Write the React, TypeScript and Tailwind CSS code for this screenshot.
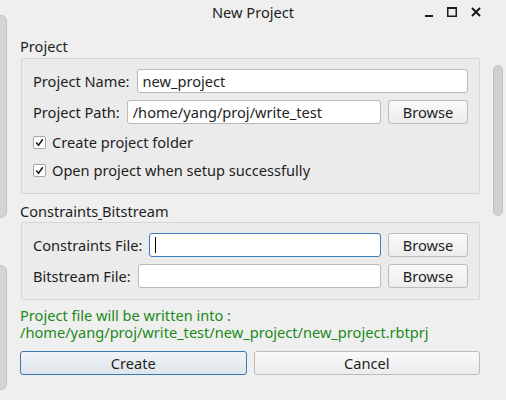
import React from 'react';

const FONT = { fontFamily: '"Noto Sans", "DejaVu Sans", sans-serif' };

const TextInput: React.FC<{ value?: string; focused?: boolean; className?: string }> = ({ value, focused, className }) => (
  <div
    className={`h-[24px] flex items-center px-[5px] bg-white rounded-[3px] border text-[14.6px] text-[#1e1e1e] ${
      focused ? 'border-[#3b7dbb]' : 'border-[#b9b9b9]'
    } ${className ?? ''}`}
  >
    {focused && <span className="w-px h-[16px] bg-black" />}
    {value}
  </div>
);

const Browse: React.FC = () => (
  <button className="w-[80px] h-[24px] rounded-[3px] border border-[#bcbcbc] bg-gradient-to-b from-[#fafafa] to-[#ececec] text-[14.6px] text-[#1e1e1e]">
    Browse
  </button>
);

const Check: React.FC<{ label: string }> = ({ label }) => (
  <div className="flex items-center h-[24px] gap-[6px]">
    <span className="w-[13px] h-[13px] bg-white border border-[#a5a5a5] rounded-[2px] flex items-center justify-center">
      <svg width="9" height="9" viewBox="0 0 9 9">
        <path d="M1.2 4.6 L3.5 7.3 L7.8 1.2" fill="none" stroke="#1a1a1a" strokeWidth="1.5" />
      </svg>
    </span>
    <span className="text-[14.6px] text-[#1e1e1e]">{label}</span>
  </div>
);

export default function App() {
  return (
    <div className="relative w-[506px] h-[400px] bg-[#efefef] overflow-hidden leading-[18px]" style={FONT}>
      {/* windows behind the dialog */}
      <div className="absolute left-[-8px] top-[15px] w-[15px] h-[203px] rounded-r-[6px] bg-[#d4d4d4] border border-[#c4c4c4]" />
      <div className="absolute left-[-8px] top-[265px] w-[15px] h-[125px] rounded-r-[6px] bg-[#d4d4d4] border border-[#c4c4c4]" />
      <div className="absolute left-[493px] top-[65px] w-[10px] h-[151px] rounded-[5px] bg-[#d0d0d0] border border-[#c2c2c2]" />

      {/* title bar */}
      <div className="relative h-[24px] flex items-center justify-center">
        <span className="text-[14.6px] text-[#222]">New Project</span>
        <div className="absolute right-[24px] top-[6px] flex items-center gap-[12px]">
          <svg width="10" height="12" viewBox="0 0 10 12">
            <rect x="1" y="9" width="8" height="2" fill="#1a1a1a" />
          </svg>
          <svg width="12" height="12" viewBox="0 0 12 12">
            <rect x="1.75" y="1.75" width="8.5" height="8.5" fill="none" stroke="#1a1a1a" strokeWidth="1.5" />
            <rect x="1" y="1" width="10" height="2" fill="#1a1a1a" />
          </svg>
          <svg width="12" height="12" viewBox="0 0 12 12">
            <path d="M2 2 L10 10 M10 2 L2 10" stroke="#1a1a1a" strokeWidth="2" />
          </svg>
        </div>
      </div>

      <div className="px-[20px] pr-[26px]">
        {/* Project */}
        <div className="h-[34px] flex items-end pb-[3px] text-[14.6px] text-[#1e1e1e]">Project</div>
        <div className="ml-px border border-[#d6d6d6] rounded-[2px] bg-[#ebebeb] h-[136px] pl-[11px] pr-[11px] pt-[10px]">
          <div className="flex items-center gap-[7px]">
            <span className="text-[14.6px] text-[#1e1e1e] whitespace-nowrap">Project Name:</span>
            <TextInput value="new_project" className="flex-1" />
          </div>
          <div className="flex items-center gap-[7px] mt-[7px]">
            <span className="text-[14.6px] text-[#1e1e1e] whitespace-nowrap">Project Path:</span>
            <TextInput value="/home/yang/proj/write_test" className="flex-1" />
            <Browse />
          </div>
          <div className="mt-[6px]">
            <Check label="Create project folder" />
          </div>
          <div className="mt-[4px]">
            <Check label="Open project when setup successfully" />
          </div>
        </div>

        {/* Constraints Bitstream */}
        <div className="h-[28px] flex items-end pb-[2px] text-[14.6px] text-[#1e1e1e] whitespace-pre">
          Constraints<span className="underline decoration-1 underline-offset-2">{' '}</span>Bitstream
        </div>
        <div className="ml-px border border-[#d6d6d6] rounded-[2px] bg-[#ebebeb] h-[78px] pl-[11px] pr-[11px] pt-[10px]">
          <div className="flex items-center gap-[7px]">
            <span className="text-[14.6px] text-[#1e1e1e] whitespace-nowrap">Constraints File:</span>
            <TextInput focused className="flex-1" />
            <Browse />
          </div>
          <div className="flex items-center gap-[7px] mt-[7px]">
            <span className="text-[14.6px] text-[#1e1e1e] whitespace-nowrap">Bitstream File:</span>
            <TextInput className="flex-1" />
            <Browse />
          </div>
        </div>

        {/* output path */}
        <div className="mt-[7px] text-[14.6px] leading-[17px] text-[#1b8a1b]">
          <div>Project file will be written into :</div>
          <div>/home/yang/proj/write_test/new_project/new_project.rbtprj</div>
        </div>

        {/* actions */}
        <div className="mt-[10px] flex gap-[7px]">
          <button className="flex-1 h-[24px] rounded-[3px] border border-[#3c78ae] bg-gradient-to-b from-[#f1f4f7] to-[#dfe5ea] text-[14.6px] text-[#1e1e1e]">
            Create
          </button>
          <button className="flex-1 h-[24px] rounded-[3px] border border-[#bcbcbc] bg-gradient-to-b from-[#fafafa] to-[#ececec] text-[14.6px] text-[#1e1e1e]">
            Cancel
          </button>
        </div>
      </div>
    </div>
  );
}
